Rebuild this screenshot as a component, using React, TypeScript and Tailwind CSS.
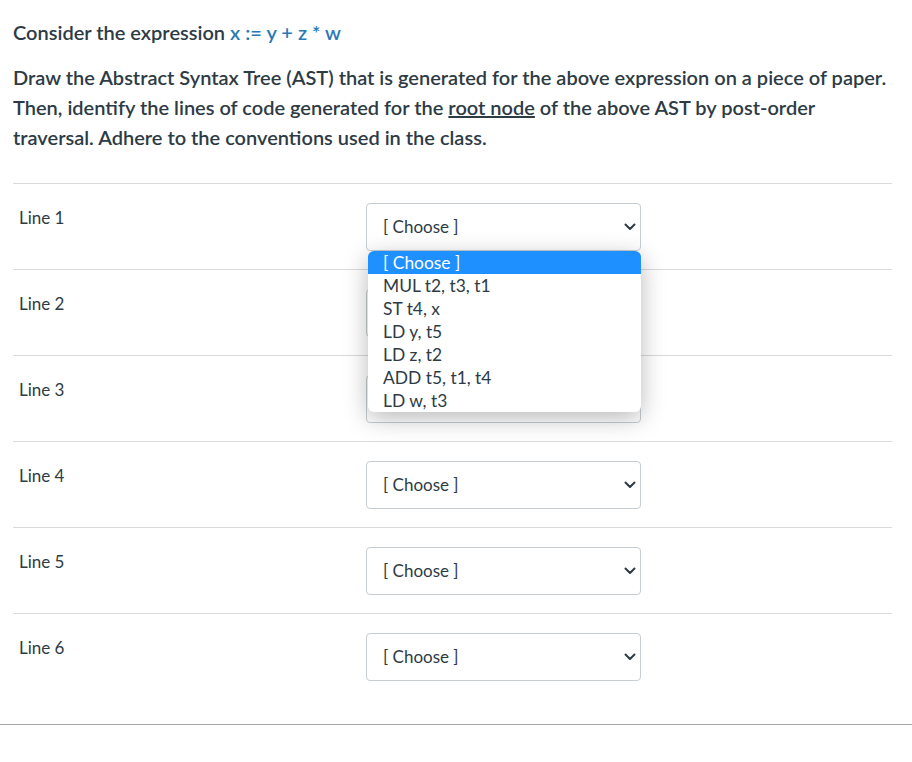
const lines = ['Line 1', 'Line 2', 'Line 3', 'Line 4', 'Line 5', 'Line 6'];
const options = ['[ Choose ]', 'MUL t2, t3, t1', 'ST t4, x', 'LD y, t5', 'LD z, t2', 'ADD t5, t1, t4', 'LD w, t3'];

function Chevron() {
    return (
        <svg width="12" height="8" viewBox="0 0 12 8" className="shrink-0">
            <polyline points="1.5,1.5 6,6 10.5,1.5" fill="none" stroke="#2d3b45" strokeWidth="2" strokeLinecap="round" strokeLinejoin="round" />
        </svg>
    );
}

function Select({ open }: { open?: boolean }) {
    return (
        <div className="relative w-[275px]">
            <div className="flex h-[48px] items-center justify-between rounded-[4px] border border-[#c7cdd1] bg-white pl-[16px] pr-[4px] text-[17px] text-[#2d3b45]">
                <span>[ Choose ]</span>
                <Chevron />
            </div>
            {open && (
                <div className="absolute left-[2px] top-[48px] z-10 w-[273px] overflow-hidden rounded-[6px] bg-white text-[17.4px] shadow-[0_6px_24px_rgba(0,0,0,0.28)]">
                    {options.map((o, i) => (
                        <div
                            key={o}
                            className={`h-[23px] pl-[15px] leading-[23px] ${i === 0 ? 'bg-[#1e90ff] text-white' : 'text-[#2d3b45]'}`}
                        >
                            {o}
                        </div>
                    ))}
                </div>
            )}
        </div>
    );
}

export default function App() {
    return (
        <div className="min-h-screen bg-white font-['Lato','Open_Sans',sans-serif] text-[#2d3b45]">
            <div className="pl-[13px] pr-[10px] pt-[19px]">
                <p className="text-[20px] font-semibold leading-[26px]">
                    Consider the expression <span className="text-[#2a78b5]">x := y + z * w</span>
                </p>
                <p className="mt-[17px] w-[880px] text-[20px] font-semibold leading-[30px]">
                    Draw the Abstract Syntax Tree (AST) that is generated for the above expression on a piece of paper. Then, identify the lines of code generated for the <span className="underline">root node</span> of the above AST by post-order traversal. Adhere to the conventions used in the class.
                </p>

                <div className="mt-[31px] w-[879px]">
                    {lines.map((l, i) => (
                        <div key={l} className="flex h-[86px] border-t border-[#dadada]">
                            <div className="w-[353px] pl-[6px] pt-[24px] text-[17px] leading-[20px]">{l}</div>
                            <div className="pt-[19px]">
                                <Select open={i === 0} />
                            </div>
                        </div>
                    ))}
                </div>
            </div>
            <div className="mt-[25px] border-t border-[#a5a5a5]" />
        </div>
    );
}
